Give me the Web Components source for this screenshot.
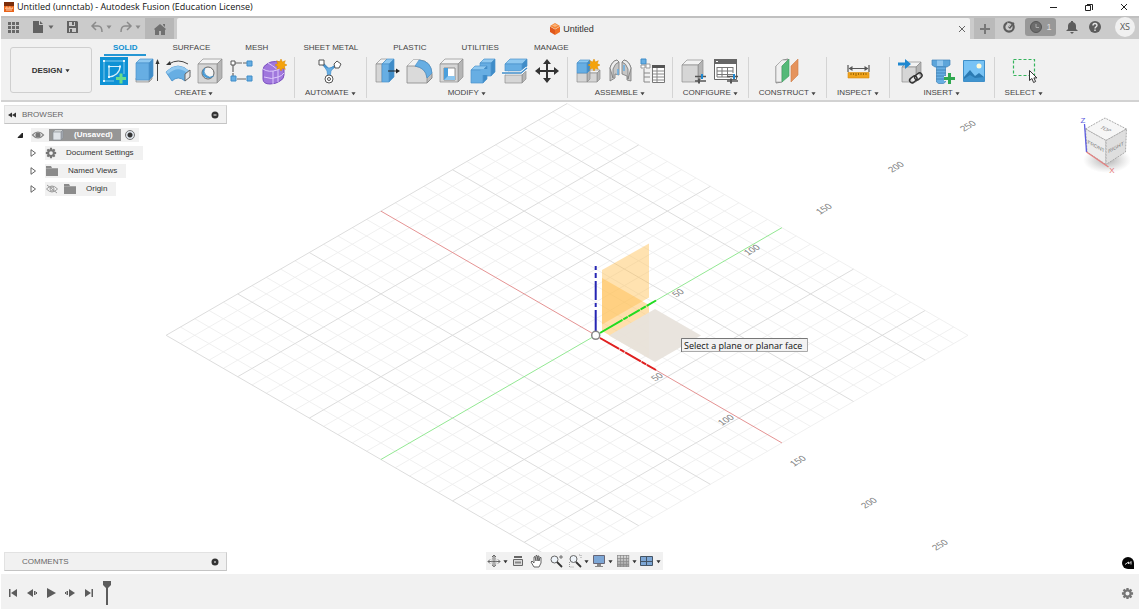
<!DOCTYPE html>
<html lang="en">
<head>
<meta charset="utf-8">
<title>Untitled (unnctab) - Autodesk Fusion (Education License)</title>
<style>
html,body{height:100%;margin:0}
body{font-family:"Liberation Sans",Arial,sans-serif;font-size:8px;color:#444;background:#fff}
</style>
</head>
<body>
<fusion-app></fusion-app>
<script>
const define = (name, html, setup) => {
  const t = document.createElement('template');
  t.innerHTML = '<style>*{box-sizing:border-box}button{font:inherit;color:inherit;background:none;border:0;padding:0;margin:0;display:flex;align-items:center;justify-content:center}:host([hidden]){display:none}</style>' + html;
  customElements.define(name, class extends HTMLElement {
    constructor() { super(); this.attachShadow({mode: 'open'}).append(t.content.cloneNode(true)); }
    connectedCallback() { if (setup) setup(this, this.shadowRoot); }
  });
};

/* ---------- icon library: name -> [viewBox size, markup] ---------- */
const box = (x, y, w, h, d, f, t, s, st) =>
  `<g stroke="${st}" stroke-width=".7" stroke-linejoin="round"><path fill="${t}" d="M${x} ${y+d}l${d} ${-d}h${w}l${-d} ${d}z"/><path fill="${s}" d="M${x+w} ${y+d}l${d} ${-d}v${h}l${-d} ${d}z"/><path fill="${f}" d="M${x} ${y+d}h${w}v${h}h${-w}z"/></g>`;
const gray = (x, y, w, h, d) => box(x, y, w, h, d, '#d6d6d6', '#f3f3f3', '#b5b5b5', '#8c8c8c');
const blue = (x, y, w, h, d) => box(x, y, w, h, d, '#67aee3', '#8fc8f0', '#3f8cc8', '#4a93cc');
const star = (x, y) => `<path transform="translate(${x} ${y})" fill="#f5a30c" stroke="#d98800" stroke-width=".5" d="M0-6l1.400 3L4.300-4.300 3.200-1.400 6 0 3.200 1.400 4.300 4.300 1.400 3.200 0 6-1.400 3.200-4.300 4.300-3.200 1.400-6 0-3.200-1.400-4.300-4.300-1.400-3z"/>`;
const sliders = `<path d="M15 19.500h11M15 24h11" stroke="#555" stroke-width="1.300"/><path d="M22 17v5" stroke="#1f88d0" stroke-width="2"/><path d="M19 21.500v5" stroke="#555" stroke-width="2"/>`;
const gearPath = (() => {
  let d = '';
  for (let i = 0; i < 8; i++) for (const [r, o] of [[7, -.2], [7, .2], [5.2, .3], [5.2, .49]]) {
    const a = (i / 8) * Math.PI * 2 + o;
    d += (d ? 'L' : 'M') + (8 + r * Math.cos(a)).toFixed(2) + ' ' + (8 + r * Math.sin(a)).toFixed(2);
  }
  return d + 'zM10.500 8a2.500 2.500 0 1 0-5 0a2.500 2.500 0 1 0 5 0z';
})();
const ICONS = {
  sketch: [28, `<path fill="#0f92d5" d="M0 0h28v28H0z"/><g fill="none" stroke="#9fd8f4" stroke-width=".8"><path d="M4 4h20v13M4 4v20h10"/><path d="M9 9.500h11c0 6-5 10-11 10.500z" stroke="#d5effb" stroke-width="1.200"/></g><g fill="#e6f6fd"><path d="M3 3h2v2H3zM23 3h2v2h-2zM3 23h2v2H3zM8 8.500h2v2H8zM19 8.500h2v2h-2zM8 19h2v2H8z"/></g><path d="M21 16.500v10M16 21.500h10" stroke="#69dc8c" stroke-width="3"/>`],
  extrude: [28, gray(4, 18, 13, 4, 3) + blue(4, 2, 13, 17, 4) + `<path d="M25.500 6v18" stroke="#444"/><path fill="#333" d="M23.500 7l2-5 2 5z"/>`],
  revolve: [28, `<path d="M5 7Q14 1 24 7" fill="none" stroke="#444"/><path fill="#333" d="M2 8l4-4 1 4z"/><path d="M2 15Q14 3 26 15l-5 9Q14 18 8 24z" fill="#67aee3" stroke="#3f8cc8" stroke-width=".8"/><path d="M2 15Q14 3 26 15l-3 1Q14 8 4 17z" fill="#93caf1"/><path d="M26 13l-5 4v7l5-4z" fill="#e5e5e5" stroke="#666"/>`],
  hole: [28, gray(2, 2, 19, 19, 5) + `<circle cx="12" cy="16" r="6" fill="#f5f5f5" stroke="#666"/><path d="M9 11a6 6 0 0 0 8.500 8A7 7 0 0 1 7 18a6 6 0 0 1 2-7z" fill="#4b9fdb" stroke="#3783bb" stroke-width=".6"/>`],
  pattern: [28, `<path d="M5 6h17M5 6v16h17" fill="none" stroke="#666" stroke-width="1.200" stroke-dasharray="9 1"/><g stroke="#3f8cc8"><path fill="#fff" stroke="#555" d="M3 4h4v4H3z"/><path fill="#67aee3" d="M19 4h5v5h-5zM19 19h5v5h-5zM3 19h5v5H3z"/></g>`],
  form: [28, `<path d="M3 13q0-4 4-6l4-2q4-1 9 0 4 1 4 5v8q0 4-4 6-4 3-10 3-7 0-7-5z" fill="#a077dd" stroke="#7a4fc0"/><path d="M3 12q6 4 14 1 5-2 7-4M13 14v13M4 20q8 3 14 0 4-1 6-4M18 13v12M8 6q4 2 10 7" fill="none" stroke="#dcc8fb"/>` + star(21, 8)],
  automate: [28, `<path d="M6 6l7 7v7M13 13l8-5" stroke="#4a93cc" stroke-width="2.500" fill="none"/><path d="M8 9q4 4 11 0l-4 5-1 7h-2l-1-7z" fill="#67aee3" stroke="#3f8cc8" stroke-width=".6"/><g fill="#fff" stroke="#555"><path d="M3 3h5v5H3z"/><path d="M21 4l4 3-2 4h-4l-1-4z"/><circle cx="13" cy="22" r="4"/><circle cx="13" cy="22" r="1.500"/></g>`],
  press: [28, gray(3, 2, 6, 18, 5) + blue(9, 2, 7, 18, 5) + `<path d="M15 14h9" stroke="#222"/><path d="M23 11.500l4 2.500-4 2.500z" fill="#222"/>`],
  fillet: [28, `<path d="M2 9l6-6h7q11 1 12 14v4l-5 5z" fill="#bdbdbd" stroke="#777" stroke-width=".8"/><path d="M8 3h7L10 9H2z" fill="#f2f2f2"/><path d="M2 9h7q12 1 13 12v5H2z" fill="#dadada" stroke="#888" stroke-width=".8"/><path d="M14 3Q26 4 27 16l-5 5Q21 11 10 9z" fill="#67aee3" stroke="#3f8cc8" stroke-width=".6"/>`],
  shell: [28, gray(3, 2, 18, 18, 5) + `<path d="M7 11h11v12H7z" fill="#fff" stroke="#777" stroke-width=".8"/><path d="M7 11h4v8h7v4H7z" fill="#4b9fdb"/><path d="M7 23l4-4h7v4z" fill="#8cc6ef"/>`],
  combine: [28, blue(11, 2, 11, 13, 4) + blue(2, 9, 12, 13, 4) + `<path d="M11.500 12h8v6h-8z" fill="#67aee3"/>`],
  split: [28, gray(4, 14, 17, 8, 4) + blue(4, 2, 17, 7, 5) + `<path d="M1 16h19l6-5" fill="none" stroke="#fff" stroke-width="3"/><path d="M1 16h19l6-5" fill="none" stroke="#3f8cc8" stroke-width="1.300"/>`],
  move: [28, `<path d="M14 5v18M5 14h18" stroke="#333" stroke-width="2"/><path fill="#333" d="M14 2l4 5h-8zM14 26l4-5h-8zM2 14l5-4v8zM26 14l-5-4v8z"/>`],
  component: [28, gray(13, 13, 10, 9, 3) + gray(3, 13, 10, 9, 3) + blue(3, 3, 10, 10, 3) + star(20, 8)],
  joint: [28, `<g stroke="#777" stroke-width=".8"><path fill="#c6c6c6" d="M4 24V11q2-7 7-8l2 2v13l-4-1v4z"/><path fill="#ededed" d="M4 11q2-7 7-8l2 2q-4 1-6 7v9z"/><path fill="#c6c6c6" d="M25 24V11q-2-7-7-8l-2 2v12l5 2v4z"/><path fill="#ededed" d="M25 11q-2-7-7-8l-2 2q4 1 6 7v10z"/></g><path d="M12 12v6M18 8v6" stroke="#67aee3" stroke-width="1.500"/>`],
  bom: [28, `<path fill="#67aee3" stroke="#3f8cc8" d="M3 2h5v5H3z"/><path fill="#fff" stroke="#999" d="M3 8h4v3H3zM8 7h4v4H8z"/><path d="M6 12v13h6M6 16h6M6 20h6" fill="none" stroke="#888"/><path fill="#fff" stroke="#777" d="M14.500 8.500h12v17h-12z"/><path fill="#555" d="M14 8h13v3H14z"/><path d="M15 14h11M15 17h11M15 20h11M15 23h11M19 11v14" stroke="#888"/>`],
  config: [28, gray(2, 3, 16, 17, 5) + sliders],
  table: [28, `<path fill="#fff" stroke="#666" d="M2.500 4.500h22v18h-22z"/><path fill="#666" d="M2 2h23v5H2z"/><path fill="#fff" d="M4 4h2v1H4z"/><path d="M5 10.500h16M5 14h16M5 17.500h16M5 10v10h13M10 10v10M15.500 10v10M21 10v6" stroke="#777" fill="none"/>` + sliders],
  plane: [28, `<path fill="#d8d8d8" stroke="#777" stroke-width=".8" d="M3 9l7-6 5-1v6l-6 17-6 1z"/><path fill="#f0f0f0" stroke="#999" stroke-width=".6" d="M3 9l6-6h6L9 9v16H3z"/><path fill="#55b978" stroke="#3c9e60" stroke-width=".6" d="M9 9l7-7v17l-7 6z"/><path fill="#e5935c" stroke="#cf7e48" stroke-width=".6" d="M18 9l7-7v16l-7 7z"/>`],
  measure: [28, `<path d="M4 8v7M25 8v7M6 11.500h17" stroke="#555" stroke-width="1.200"/><path fill="#555" d="M4.500 11.500l4-2.500v5zM24.500 11.500l-4-2.500v5z"/><path fill="#f0a31c" stroke="#d98c0e" stroke-width=".6" d="M4 15.500h21V21H4z"/><path d="M7 16v2M9.500 16v2M12 16v3M14.500 16v2M17 16v2M19.500 16v2M22 16v2" stroke="#8a5a00" stroke-width=".8"/>`],
  link: [28, gray(6, 5, 14, 15, 5) + `<path fill="#1f88d0" d="M2 5.500h7V2l6 5-6 5V8.500H2z"/><g fill="none"><g stroke="#f0f0f0" stroke-width="5"><path d="M17 24l6-6"/></g><g stroke="#333" stroke-width="1.500"><rect x="13" y="20" width="8" height="5" rx="2.500" transform="rotate(-38 17 22)"/><rect x="18" y="17" width="8" height="5" rx="2.500" transform="rotate(-38 22 19)"/></g></g>`],
  bolt: [28, `<path fill="#5da5da" stroke="#3f83b8" stroke-width=".7" d="M4 3h18v5l-3 2H7L4 8z"/><path fill="#90c6ee" d="M9 3.500h6V9H9z"/><path fill="#67aee3" stroke="#3f83b8" stroke-width=".7" d="M8.500 10h9v15l-2 1.500h-5l-2-1.500z"/><path d="M8 13h10M8 16h10M8 19h10M8 22h10" stroke="#3f83b8" stroke-width=".9"/><path d="M21.500 16v11M16 21.500h11" stroke="#f0f0f0" stroke-width="5"/><path d="M21.500 16v11M16 21.500h11" stroke="#2fa84f" stroke-width="3"/>`],
  image: [28, `<path fill="#78c3f5" stroke="#3f8fc8" d="M3.500 3.500h21v21h-21z"/><circle cx="19" cy="9" r="2.500" fill="#fffbd8"/><path fill="#2b7ab3" d="M4 20l6-7 5 6 4-3 5 4v4H4z"/><path fill="#3f94cf" d="M4 22l6-4 5 3 9-1v4H4z"/>`],
  select: [28, `<path d="M3.500 2.500h21v16h-21z" fill="none" stroke="#35b45c" stroke-width="1.200" stroke-dasharray="3 2"/><path fill="#fff" stroke="#333" d="M19.500 13.500v10l2.400-2 1.700 4 2-1-1.700-3.600h3z"/>`],
  caret: [6, `<path fill="currentColor" d="M.5 1.500h5L3 5z"/>`],
  apps: [14, `<path fill="#686868" d="M2 2h3v3H2zM6 2h3v3H6zM10 2h3v3h-3zM2 6h3v3H2zM6 6h3v3H6zM10 6h3v3h-3zM2 10h3v3H2zM6 10h3v3H6zM10 10h3v3h-3z"/>`],
  file: [14, `<path fill="#626262" d="M2 1h6v4h4v8H2zM9 1l3 3H9z"/>`],
  save: [14, `<path fill="#626262" d="M2 1h10l1 1v11H2z"/><path fill="#cbcbcb" d="M4 2h6v4H4zM4 8h7v4H4z"/><path fill="#626262" d="M7 2h2v3H7zM5 9h2v3H5z"/>`],
  undo: [14, `<path fill="none" stroke="#8b8b8b" stroke-width="1.500" d="M6 2L2 6l4 4M2 6h6q4 0 4 6"/>`],
  redo: [14, `<path fill="none" stroke="#8b8b8b" stroke-width="1.500" d="M8 2l4 4-4 4M12 6H6q-4 0-4 6"/>`],
  home: [14, `<path fill="#707070" d="M7 2l6 5-1 1v5H8V9H6v4H2V8L1 7zM10 2h2v3l-2-2z"/>`],
  doc: [14, `<path fill="#f58634" d="M7 1l5 3-5 3-5-3z"/><path fill="#e0571b" d="M2 4.500l5 3V13l-5-3z"/><path fill="#ef6f25" d="M12 4.500l-5 3V13l5-3z"/><path fill="#fbb27a" d="M4 3.500l3-1.500 3 1.500-3 1.500z"/>`],
  close: [10, `<path stroke="#666" d="M2 2l6 6M8 2L2 8"/>`],
  plus: [12, `<path stroke="#787878" stroke-width="2" d="M6 1v10M1 6h10"/>`],
  ext: [14, `<circle cx="7" cy="7" r="4.700" fill="none" stroke="#5c5c5c" stroke-width="2.200"/><path fill="#5c5c5c" d="M6 7l5-5 1.500 1.500L8 9z"/><path stroke="#cbcbcb" d="M5 3l4 1.500L7 7" fill="none"/>`],
  clock: [14, `<circle cx="7" cy="7" r="5.500" fill="#6c6c6c" stroke="#555"/><path d="M7 4v3.500h3" fill="none" stroke="#aaa"/>`],
  bell: [14, `<path fill="#5c5c5c" d="M6 1h2v1q3 1 3 4v3l2 2H1l2-2V6q0-3 3-4zM5 12h4l-2 2z"/>`],
  help: [14, `<circle cx="7" cy="7" r="6" fill="#5c5c5c"/><path d="M5 5.500q0-2 2-2t2 1.800q0 1-1 1.500T7 8.500M7 9.500V11" fill="none" stroke="#e4e4e4" stroke-width="1.400"/>`],
  brand: [12, `<path fill="#e8641b" d="M1 1h10v10H1z"/><path fill="#7b2c08" d="M1 1h10v4H1z"/><path fill="#ffb079" d="M2 7l2-2 1 2 2-2 1 2 2-1v2H2z"/><path fill="#fff" d="M3 8h6v2H3z" opacity=".35"/>`],
  min: [10, `<path stroke="#222" d="M1 5.500h7"/>`],
  max: [10, `<path fill="none" stroke="#222" d="M1.500 3.500h5v5h-5zM3 2.500h5.500V8"/>`],
  x: [10, `<path stroke="#222" d="M2 2l6 6M8 2L2 8"/>`],
  collapse: [10, `<path fill="#333" d="M5 2.500v5L1 5zM9 2.500v5L5 5z"/>`],
  minus: [8, `<circle cx="4" cy="4" r="3.500" fill="#333"/><path stroke="#fff" d="M2.500 4h3"/>`],
  dot: [8, `<circle cx="4" cy="4" r="3.500" fill="#333"/><circle cx="4" cy="4" r="1" fill="#bbb"/>`],
  open: [8, `<path fill="#222" stroke="#222" d="M6.500 2v4.500H2z"/>`],
  shut: [8, `<path fill="#fff" stroke="#555" stroke-width=".9" d="M2 .7l4.500 3.300L2 7.300z"/>`],
  eye: [14, `<path fill="none" stroke="#888" stroke-width="1.200" d="M1.500 7Q7 1 12.500 7 7 13 1.500 7z"/><circle cx="7" cy="7" r="2.600" fill="#777"/>`],
  hidden: [14, `<path fill="none" stroke="#999" d="M1.500 7Q7 1 12.500 7 7 13 1.500 7zM2 3l10 8"/><circle cx="7" cy="7" r="2" fill="none" stroke="#999"/>`],
  cube: [12, box(1, 1, 8, 8, 2, '#dfe3e8', '#f6f7f8', '#a9b0b8', '#8a8f95')],
  gear: [16, `<path fill="#757575" fill-rule="evenodd" d="${gearPath}"/>`],
  folder: [14, `<path fill="#8b8b8b" d="M1 2h5l1 2h6v8H1z"/><path stroke="#b5b5b5" stroke-width=".6" d="M1 4.500h12"/>`],
  orbit: [14, `<path fill="none" stroke="#666" d="M7 1v12M1 7.500h12M5 3l2-2 2 2M5 11l2 2 2-2M3 5.500l-2 2 2 2M11 5.500l2 2-2 2"/><ellipse cx="7" cy="7.500" rx="2" ry="5" fill="none" stroke="#999" stroke-width=".8"/>`],
  look: [14, `<path fill="#ddd" stroke="#666" d="M2.500 5.500h9v6h-9z"/><path fill="#666" d="M3 2h8v2H3z"/><path stroke="#888" d="M4 8.500h6" stroke-width="2"/>`],
  pan: [14, `<path fill="#fff" stroke="#555" stroke-width=".9" d="M4 13L1 8l1-1 2 2V3l1-.5L6 7V1.500h1L8 7V2h1v5l1-3.500h1L11 9l-2 4z"/>`],
  zoom: [14, `<circle cx="5.500" cy="5.500" r="3.500" fill="#eef4fa" stroke="#666"/><path d="M8 8l5 5" stroke="#333" stroke-width="1.800"/><path d="M12 1v4M10 3h4" stroke="#555" stroke-width=".8"/>`],
  fit: [14, `<path d="M1.500 8v5h5M11 1h2v3" fill="none" stroke="#999" stroke-dasharray="1 1"/><circle cx="5.500" cy="5" r="3.500" fill="#eef4fa" stroke="#666"/><path d="M8 8l5 5" stroke="#333" stroke-width="1.800"/>`],
  display: [14, `<path fill="#7da7d6" stroke="#667" d="M1.500 1.500h11v8h-11z"/><path fill="#888" d="M5 10h4v2h2v1H3v-1h2z"/>`],
  grid: [14, `<defs><linearGradient id="g" x2="0" y2="1"><stop offset="0" stop-color="#ddd"/><stop offset="1" stop-color="#999"/></linearGradient></defs><path fill="url(#g)" d="M1 1h12v12H1z"/><path stroke="#888" stroke-width=".7" d="M1.500 1v12M4.500 1v12M7.500 1v12M10.500 1v12M1 1.500h12M1 4.500h12M1 7.500h12M1 10.500h12M12.800 1v12"/>`],
  views: [14, `<path fill="#7da7d6" stroke="#456" d="M.5 2.500h12v9H.5zM.5 7.500h12M6.500 2.500v9"/>`],
  first: [12, `<path fill="#5c5c5c" d="M2 2h1.500v8H2zM10 2v8L4 6z"/>`],
  back: [12, `<path fill="#5c5c5c" d="M7 2v8L1 6zM8 4h1.500v4H8zM10 5h1v2h-1z"/>`],
  play: [12, `<path fill="#5c5c5c" d="M2 1l9 5-9 5z"/>`],
  next: [12, `<path fill="#5c5c5c" d="M5 2v8l6-4zM2.500 4H4v4H2.500zM1 5h1v2H1z"/>`],
  last: [12, `<path fill="#5c5c5c" d="M8.500 2H10v8H8.500zM2 2v8l6-4z"/>`],
  chat: [14, `<path d="M7 1a6 6 0 0 1 6 6v6H7A6 6 0 0 1 7 1z" fill="#050505"/><path d="M4 8.500l3.500-2.500v2l2.500-2.500v3" fill="none" stroke="#ddd"/>`]
};
define('ui-icon', `<style>:host{display:inline-flex;flex:none}svg{display:block}</style>`, (el, root) => {
  if (root.querySelector('svg')) return;
  const [n, m] = ICONS[el.getAttribute('name')];
  const s = el.getAttribute('size') || n;
  root.innerHTML += `<svg width="${s}" height="${s}" viewBox="0 0 ${n} ${n}" aria-hidden="true">${m}</svg>`;
});

/* ---------- window title ---------- */
define('title-bar', `<style>
:host{display:flex;align-items:center;height:16px;padding:0 10px 2px 2px;background:#fff;color:#111;font:9px/14px "Open Sans","Noto Sans",sans-serif}
span{flex:1;padding-left:2px}
nav{display:flex;gap:25px}
</style><ui-icon name="brand"></ui-icon><span>Untitled (unnctab) - Autodesk Fusion (Education License)</span>
<nav><button aria-label="Minimize"><ui-icon name="min"></ui-icon></button><button aria-label="Restore"><ui-icon name="max"></ui-icon></button><button aria-label="Close"><ui-icon name="x"></ui-icon></button></nav>`);

/* ---------- quick access and document tab ---------- */
define('app-bar', `<style>
:host{display:flex;height:23px;background:#cbcbcb;border-top:2px solid #c0c0c0;color:#666;padding-right:4px}
.quick{display:flex;align-items:center;width:144px;padding:0 0 4px 5px;gap:11px;flex:none}
.quick button{gap:3px}
.quick .dim{gap:2px;color:#8b8b8b;margin-right:-4px}
.home{width:29px;background:#b7b7b7}
.doc{flex:1;margin-left:3px;background:#f1f1f1;border-radius:2px 2px 0 0;display:flex;align-items:center;font-size:9px;line-height:14px;color:#333;padding:1px 3px 0 0}
.doc>span{flex:1;display:flex;align-items:center;justify-content:center;gap:1px;padding-left:8px}
.new{width:21px;margin:0 7px 0 4px;background:#bababa}
.side{display:flex;align-items:center;gap:9px;padding-bottom:3px}
.pill{width:31px;height:18px;border-radius:3px;background:#989898;color:#ddd;gap:3px;font-size:9px}
.me{width:20px;height:20px;border-radius:50%;background:#f0f0f0;color:#555;font:9px/12px "Open Sans",sans-serif;margin-left:4px}
</style>
<div class="quick"><button aria-label="Data panel"><ui-icon name="apps"></ui-icon></button><button aria-label="File"><ui-icon name="file"></ui-icon><ui-icon name="caret"></ui-icon></button><button aria-label="Save"><ui-icon name="save"></ui-icon></button><button class="dim" aria-label="Undo"><ui-icon name="undo"></ui-icon><ui-icon name="caret"></ui-icon></button><button class="dim" aria-label="Redo"><ui-icon name="redo"></ui-icon><ui-icon name="caret"></ui-icon></button></div>
<button class="home" aria-label="Home"><ui-icon name="home"></ui-icon></button>
<div class="doc"><span><ui-icon name="doc"></ui-icon>Untitled</span><button aria-label="Close tab"><ui-icon name="close"></ui-icon></button></div>
<button class="new" aria-label="New design"><ui-icon name="plus"></ui-icon></button>
<div class="side"><button aria-label="Extensions"><ui-icon name="ext"></ui-icon></button><button class="pill"><ui-icon name="clock"></ui-icon>1</button><button aria-label="Notifications"><ui-icon name="bell"></ui-icon></button><button aria-label="Help"><ui-icon name="help"></ui-icon></button><button class="me">XS</button></div>`);

/* ---------- ribbon ---------- */
define('tool-group', `<style>
:host{display:flex;flex-direction:column;align-items:center;height:41px;padding:0 4px;border-right:1px solid #d4d4d4;flex:none}
:host(:first-of-type){padding-left:0}
:host(:last-of-type){border-right:0}
.row{display:flex;height:28px}
.row button{width:32px}
.name{line-height:12px;height:12px;margin-top:2px;padding:0 6px;gap:2px;white-space:nowrap;color:#444}
</style><div class="row"></div><button class="name"><slot></slot><ui-icon name="caret" size="5"></ui-icon></button>`, (el, root) => {
  root.querySelector('.row').innerHTML = el.getAttribute('tools').split(' ').map(n => `<button aria-label="${n}"><ui-icon name="${n}"></ui-icon></button>`).join('');
});
define('tool-ribbon', `<style>
:host{display:flex;height:63px;padding:8px 0 0 9px;background:#f1f1f1;border-bottom:2px solid #d2d2d2}
.mode{width:82px;height:46px;flex:none;border:1px solid #cfcfcf;border-radius:3px;font-weight:bold;gap:3px;color:#333}
.main{flex:1;margin:-5px 0 0 6px;min-width:0}
.tabs{display:flex;gap:17px;height:14px;padding-left:6px;margin-bottom:1px}
.tabs button{padding:0 9px;line-height:12px;white-space:nowrap;border-bottom:2px solid transparent}
.tabs button[aria-selected=true]{color:#0f8fd2;border-color:#2596d3;font-weight:bold}
.groups{display:flex}
</style>
<button class="mode">DESIGN<ui-icon name="caret" size="5"></ui-icon></button>
<div class="main"><div class="tabs" role="tablist"><button role="tab" aria-selected="true">SOLID</button><button role="tab">SURFACE</button><button role="tab">MESH</button><button role="tab">SHEET METAL</button><button role="tab">PLASTIC</button><button role="tab">UTILITIES</button><button role="tab">MANAGE</button></div>
<div class="groups">
<tool-group tools="sketch extrude revolve hole pattern form">CREATE</tool-group>
<tool-group tools="automate">AUTOMATE</tool-group>
<tool-group tools="press fillet shell combine split move">MODIFY</tool-group>
<tool-group tools="component joint bom">ASSEMBLE</tool-group>
<tool-group tools="config table">CONFIGURE</tool-group>
<tool-group tools="plane">CONSTRUCT</tool-group>
<tool-group tools="measure">INSPECT</tool-group>
<tool-group tools="link bolt image">INSERT</tool-group>
<tool-group tools="select">SELECT</tool-group>
</div></div>`);

/* ---------- 3D scene ---------- */
define('model-scene', `<style>:host{display:block;min-height:0;overflow:hidden}svg{display:block;width:100%;height:100%}text{font:9px "Liberation Sans",sans-serif;fill:#808080;text-anchor:middle}.tip{font:9px "Open Sans","Noto Sans",sans-serif;fill:#111;text-anchor:start}</style>
<svg viewBox="1 102 1138 472" preserveAspectRatio="xMidYMid slice" role="img" aria-label="Model space"></svg>`, (el, root) => {
  const O = [595.7, 335.3], U = 14.32, V = 8.28, LO = -15, HI = 13;
  const p = (a, b) => (O[0] + (a + b) * U).toFixed(1) + ' ' + (O[1] + (a - b) * V).toFixed(1);
  let minor = '', major = '';
  for (let i = LO; i <= HI; i++) {
    const d = `M${p(i, LO)}L${p(i, HI)}M${p(LO, i)}L${p(HI, i)}`;
    if (i === 0) continue;
    if (i % 5 === 0) major += d; else minor += d;
  }
  const label = (t, x, y) => `<text transform="translate(${x} ${y}) rotate(-30) skewX(20)" y="3">${t}</text>`;
  root.querySelector('svg').innerHTML =
    `<path d="${minor}" stroke="#eeeeee" stroke-width=".9"/><path d="${major}" stroke="#dddddd"/>
    <path d="M${p(LO, 0)}L${p(HI, 0)}" stroke="#e59393"/><path d="M${p(0, LO)}L${p(0, HI)}" stroke="#93e893"/>
    <path d="M602 278l47 27v53l-47-27z" fill="#ffbf57" fill-opacity=".5"/><path d="M602 270l47-26.500v54l-47 27z" fill="#ffbe50" fill-opacity=".45"/>
    <path d="M655 309l46 26.500-46 26.500-46-26.500z" fill="#e8e3dc" fill-opacity=".95"/>
    <g stroke-width="2"><path d="M595.700 331v-21m0-3v-4m0-3v-19m0-3v-5m0-3v-4" stroke="#2626b4"/><path d="M600 333l56-32.500" stroke="#21dc21" stroke-dasharray="26 1 5 1 13 1 6 1"/><path d="M600 338l56 32" stroke="#e02020" stroke-dasharray="22 1 5 1 18 1 5 1"/></g>
    <circle cx="595.700" cy="335.300" r="4" fill="#fff" stroke="#888" stroke-width="1.500"/>` +
    [[50,678,293],[100,752,250],[150,824,209],[200,896,167],[250,968,126],[50,657,377],[100,726,420],[150,798,461],[200,869,503],[250,940,545]].map(a => label(...a)).join('') +
    `<path d="M681.500 338.500h126v13h-126z" fill="#f2f2f2" stroke="#aaa"/><path d="M681.500 352v-13.500h126" fill="none" stroke="#777"/><text class="tip" x="684" y="349">Select a plane or planar face</text>`;
});
define('view-cube', `<style>:host{display:block}svg{display:block}text{font:5px "Liberation Sans",sans-serif;fill:#777;text-anchor:middle}.ax{font-size:8px}</style>
<svg width="60" height="72" viewBox="1074 108 60 72" role="img" aria-label="View cube">
<defs><radialGradient id="s"><stop offset="0" stop-color="#777" stop-opacity=".6"/><stop offset="1" stop-color="#999" stop-opacity="0"/></radialGradient></defs>
<ellipse cx="1107" cy="160" rx="24" ry="13" fill="url(#s)"/>
<g stroke="#aaa" stroke-dasharray="2 1"><path fill="#f6f6f6" d="M1085.500 129l19.500-11 21.500 11-20.500 11.500z"/><path fill="#ececec" d="M1085.500 129l20.500 11.500v24L1087 152z"/><path fill="#dedede" d="M1106 140.500l20.500-11.500-1 23-19.500 12.500z"/></g>
<path d="M1084.500 124l2 28" stroke="#5c5ce0" stroke-width="1.300"/><path d="M1086.500 152l22 15" stroke="#e58080" stroke-width="1.300"/>
<text transform="translate(1106 129) rotate(25) skewX(-30)" y="2">TOP</text><text transform="translate(1096 146) skewY(28)" y="2">FRONT</text><text transform="translate(1116 147) skewY(-28)" y="2">RIGHT</text>
<text class="ax" x="1083" y="123" style="fill:#5c5ce0">Z</text><text class="ax" x="1112" y="173" style="fill:#e57070">X</text></svg>`);

/* ---------- panels ---------- */
define('panel-head', `<style>
:host{display:flex;align-items:center;width:223px;height:19px;padding:0 7px 0 2px;background:#f1f1f1;border:1px solid #e2e2e2;border-right-color:#ccc;border-bottom-color:#c4c4c4;color:#666}
span{flex:1;padding-left:5px;line-height:12px}i{width:10px}
</style><i><slot name="lead"></slot></i><span><slot></slot></span><slot name="action"></slot>`);
define('tree-row', `<style>
:host{display:flex;align-items:center;height:18px;gap:8px;padding-left:25px;color:#333}
:host([root]){padding-left:12px;gap:7px}
.body{display:flex;align-items:center;height:14px;background:#f1f1f1;padding-right:9px;line-height:12px;white-space:nowrap}
:host([root]) .body{padding-right:4px;gap:4px}
</style><slot name="toggle"></slot><div class="body"><slot></slot></div>`);
define('browser-panel', `<style>
:host{display:block}
.tree{padding-top:2px}
tree-row span{padding-left:9px}
.far{padding-left:4px}
.sel{display:flex;align-items:center;gap:10px;height:12px;padding:0 8px 0 3px;background:#969696;color:#fff;font-weight:bold}
input{appearance:none;width:10px;height:10px;margin:0;border:1px solid #777;border-radius:50%;background:radial-gradient(#333 0 2px,#dfe5ec 3px)}
</style>
<panel-head><button slot="lead" aria-label="Collapse"><ui-icon name="collapse"></ui-icon></button>BROWSER<button slot="action" aria-label="Minimize browser"><ui-icon name="minus"></ui-icon></button></panel-head>
<div class="tree">
<tree-row root><button slot="toggle" aria-label="Collapse tree"><ui-icon name="open"></ui-icon></button><ui-icon name="eye"></ui-icon><div class="sel"><ui-icon name="cube"></ui-icon>(Unsaved)</div><input type="radio" checked aria-label="Activate component"></tree-row>
<tree-row><button slot="toggle" aria-label="Expand"><ui-icon name="shut"></ui-icon></button><ui-icon name="gear" size="12"></ui-icon><span>Document Settings</span></tree-row>
<tree-row><button slot="toggle" aria-label="Expand"><ui-icon name="shut"></ui-icon></button><ui-icon name="folder"></ui-icon><span>Named Views</span></tree-row>
<tree-row><button slot="toggle" aria-label="Expand"><ui-icon name="shut"></ui-icon></button><ui-icon name="hidden"></ui-icon><ui-icon class="far" name="folder"></ui-icon><span>Origin</span></tree-row>
</div>`);
define('nav-tools', `<style>
:host{display:flex;align-items:center;height:18px;padding:0 2px 0 1px;background:#f1f1f1;color:#333}
button{height:18px;padding-right:5px}
button.menu{gap:2px;padding-right:3px}
button:last-child{padding-right:0}
</style>
<button class="menu" aria-label="Orbit"><ui-icon name="orbit"></ui-icon><ui-icon name="caret" size="5"></ui-icon></button><button aria-label="Look at"><ui-icon name="look"></ui-icon></button><button aria-label="Pan"><ui-icon name="pan"></ui-icon></button><button aria-label="Zoom"><ui-icon name="zoom"></ui-icon></button><button class="menu" aria-label="Fit"><ui-icon name="fit"></ui-icon><ui-icon name="caret" size="5"></ui-icon></button><button class="menu" aria-label="Display settings"><ui-icon name="display"></ui-icon><ui-icon name="caret" size="5"></ui-icon></button><button class="menu" aria-label="Grid and snaps"><ui-icon name="grid"></ui-icon><ui-icon name="caret" size="5"></ui-icon></button><button class="menu" aria-label="Viewports"><ui-icon name="views"></ui-icon><ui-icon name="caret" size="5"></ui-icon></button>`);
define('time-line', `<style>
:host{display:flex;align-items:center;height:35px;padding:3px 5px 0 6px;background:#f1f1f1}
.play{display:flex;gap:7px;flex:1;align-items:center}
svg{display:block}
</style>
<div class="play"><button aria-label="Start"><ui-icon name="first"></ui-icon></button><button aria-label="Step back"><ui-icon name="back"></ui-icon></button><button aria-label="Play"><ui-icon name="play"></ui-icon></button><button aria-label="Step forward"><ui-icon name="next"></ui-icon></button><button aria-label="End"><ui-icon name="last"></ui-icon></button><svg width="10" height="26" viewBox="0 0 10 26"><path fill="#5c5c5c" d="M1 1h8v4L6 8v17H4V8L1 5z"/></svg></div>
<button aria-label="Timeline settings"><ui-icon name="gear" size="13"></ui-icon></button>`);

define('fusion-app', `<style>
:host{display:flex;flex-direction:column;height:100%;padding-left:1px;background:#fff;overflow:hidden}
main{flex:1;min-height:0;display:grid;grid-template:minmax(0,1fr)/minmax(0,1fr)}
main>*{grid-area:1/1}
browser-panel{justify-self:start;align-self:start;margin:3px}
view-cube{justify-self:end;align-self:start;margin:6px 5px}
panel-head{justify-self:start;align-self:end;margin:3px}
nav-tools{justify-self:center;align-self:end;margin:0 0 4px 8px}
.chat{justify-self:end;align-self:end;margin:4px}
</style>
<title-bar></title-bar><app-bar></app-bar><tool-ribbon></tool-ribbon>
<main><model-scene></model-scene><browser-panel></browser-panel><view-cube></view-cube><panel-head>COMMENTS<button slot="action" aria-label="Expand comments"><ui-icon name="dot"></ui-icon></button></panel-head><nav-tools></nav-tools><button class="chat" aria-label="Assistant"><ui-icon name="chat"></ui-icon></button></main>
<time-line></time-line>`);
</script>
</body>
</html>
